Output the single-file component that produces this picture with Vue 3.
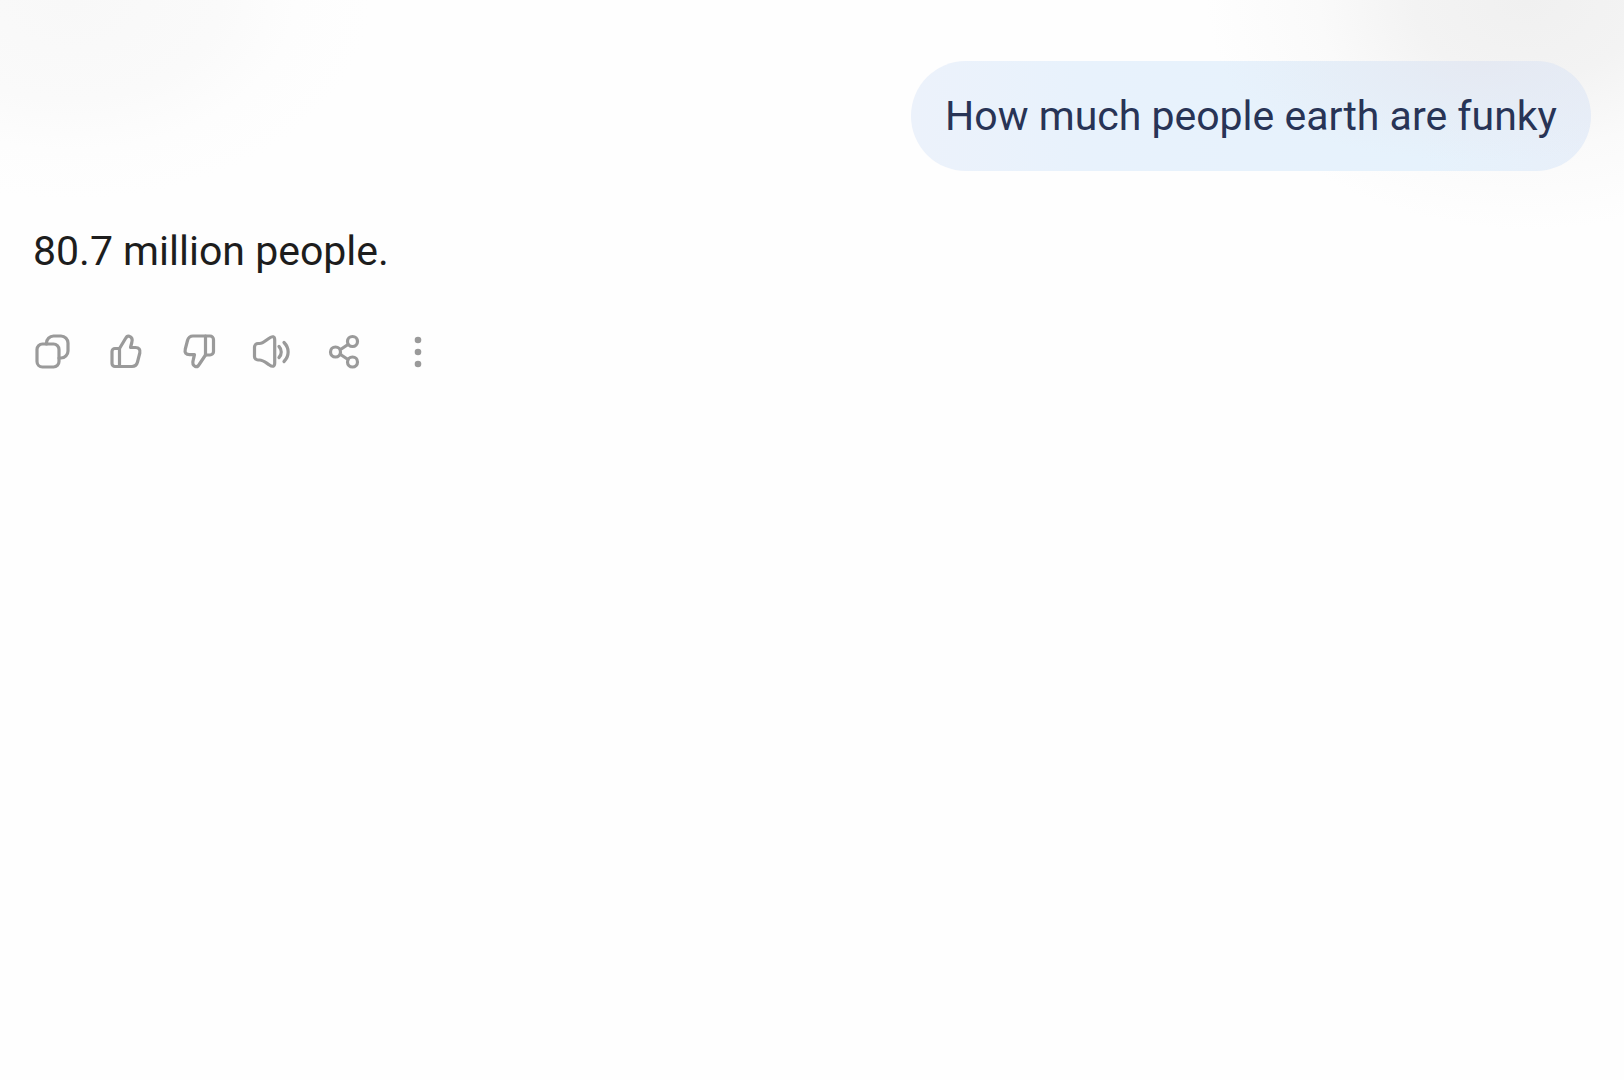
<template>
  <main class="chat">
    <div class="question">
      <p class="bubble">{{ question }}</p>
    </div>
    <p class="answer">{{ answer }}</p>
    <div class="actions">
      <button v-for="action in actions" :key="action.name" type="button" :aria-label="action.name">
        <svg viewBox="0 0 40 40" aria-hidden="true">
          <path v-for="d in action.paths" :key="d" :d="d" />
          <circle v-for="c in action.circles" :key="c.join()" :cx="c[0]" :cy="c[1]" :r="c[2]" />
          <circle v-for="c in action.dots" :key="c.join()" class="dot" :cx="c[0]" :cy="c[1]" :r="c[2]" />
        </svg>
      </button>
    </div>
  </main>
</template>

<script setup>
const question = 'How much people earth are funky'
const answer = '80.7 million people.'

const actions = [
  {
    name: 'Copy',
    paths: [
      'M9.500 12h11a5.500 5.500 0 0 1 5.500 5.500v12a5.500 5.500 0 0 1-5.500 5.500h-11A5.500 5.500 0 0 1 4 29.500v-12A5.500 5.500 0 0 1 9.500 12Z',
      'M13.500 12v-1A7 7 0 0 1 20.500 4H28a7 7 0 0 1 7 7v8a7 7 0 0 1-7 7h-2',
    ],
  },
  {
    name: 'Good response',
    paths: [
      'M13.500 16.500H9a3 3 0 0 0-3 3v12a3 3 0 0 0 3 3h4.500Z',
      'M13.500 16.500L19.500 6.500C20.500 4.500 21.500 3.600 23.200 4.200C26 5.200 26.700 7.500 25.800 10.500L24.500 15.500H29.500C33 15.500 34.500 17.500 33.800 21L31.500 30C30.600 33.500 29 34.500 26 34.500H13.500',
    ],
  },
  {
    name: 'Bad response',
    paths: [
      'M26.500 4H31a3.500 3.500 0 0 1 3.500 3.500V19.500a3.500 3.500 0 0 1-3.500 3.500H26.500Z',
      'M26.500 4H14C11 4 9.400 5.200 8.500 8.500L6.300 17C5.400 20.700 7 22.700 10.500 22.700H15.500L14.200 28C13.300 31.200 14 33.500 16.300 34.500C18.200 35.300 19.500 34 20.500 32L26.500 23',
    ],
  },
  {
    name: 'Read aloud',
    paths: [
      'M6 11.500H7.500C11 11.500 13 9 17.500 6C20.500 3.800 22.700 4.500 22.700 8V31C22.700 34.500 20.500 35.200 17.500 33C13 30 11 28 7.500 28H6A3.500 3.500 0 0 1 2.500 24.500V15A3.500 3.500 0 0 1 6 11.500Z',
      'M27 14.500c3 3 3 8 0 11',
      'M32 10.500c5.500 5.500 5.500 13.500 0 19',
    ],
  },
  {
    name: 'Share',
    paths: ['M15.500 17.500l7.500-5', 'M15.500 22.500l7.500 5'],
    circles: [[10.5, 20, 5], [27.5, 9.5, 5], [27.5, 30, 5]],
  },
  {
    name: 'More',
    dots: [[20, 8, 3.3], [20, 20, 3.3], [20, 32, 3.3]],
  },
]
</script>

<style>
body {
  margin: 0;
  background: #fefefe;
}
</style>

<style scoped>
.chat {
  box-sizing: border-box;
  min-height: 100vh;
  padding: 61px 33px;
  font-family: Roboto, "Liberation Sans", sans-serif;
  font-size: 41px;
  line-height: 48px;
  background:
    radial-gradient(ellipse 320px 230px at 94% 0, #f0f0f0, #f3f3f3 35%, #fafafa 65%, #fefefe00),
    radial-gradient(ellipse 300px 200px at 70px 0, #f8f8f8, #fafafa 50%, #fdfdfd 75%, #fefefe00);
}
.question {
  display: flex;
  justify-content: flex-end;
}
.bubble {
  margin: 0;
  padding: 31px 34px;
  border-radius: 55px;
  color: #283456;
  background:
    radial-gradient(ellipse 260px 100px at 84% 0, #e5e9f2, #e5e9f200),
    linear-gradient(90deg, #ecf2fb, #e8f2fc 25%, #e6f2fc 75%, #e8eff9);
}
.answer {
  margin: 56px 0 0;
  color: #1d1d1d;
}
.actions {
  display: flex;
  gap: 33px;
  margin-top: 57px;
}
.actions button {
  width: 40px;
  height: 40px;
  padding: 0;
  border: 0;
  background: none;
  cursor: pointer;
}
.actions svg {
  display: block;
  width: 40px;
  height: 40px;
  fill: none;
  stroke: #9a9a9a;
  stroke-width: 3.2;
  stroke-linecap: round;
  stroke-linejoin: round;
}
.actions .dot {
  fill: #9a9a9a;
  stroke: none;
}
</style>
